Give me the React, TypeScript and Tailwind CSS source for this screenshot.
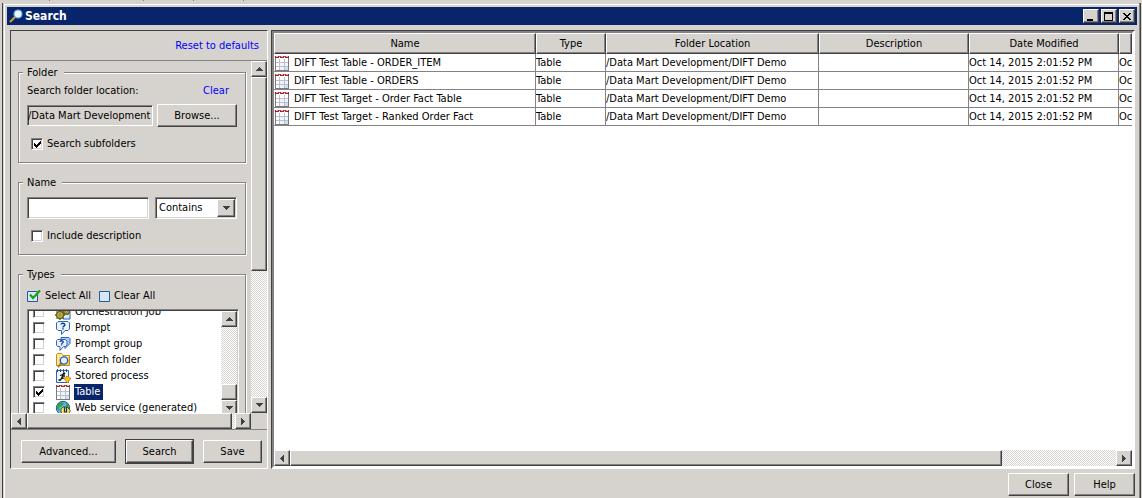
import { useState } from "react";
import type { ReactNode } from "react";
import clsx from "clsx";

const raised =
  "bg-[#d6d3ce] border border-t-white border-l-white border-r-[#424142] border-b-[#424142] shadow-[inset_-1px_-1px_0_#848284]";
const sunken =
  "border border-t-[#848284] border-l-[#848284] border-r-white border-b-white shadow-[inset_1px_1px_0_#424142,inset_-1px_-1px_0_#d6d3ce]";
const track =
  "bg-[conic-gradient(#fff_25%,#d6d3ce_0_50%,#fff_0_75%,#d6d3ce_0)] bg-[length:2px_2px]";

const rows = [
  "DIFT Test Table - ORDER_ITEM",
  "DIFT Test Table - ORDERS",
  "DIFT Test Target - Order Fact Table",
  "DIFT Test Target - Ranked Order Fact",
];

function TableIcon() {
  return (
    <svg width="16" height="16" viewBox="0 0 16 16" shapeRendering="crispEdges" className="shrink-0">
      <path d="M1 1h14v15H1z" fill="#7b797b" />
      <path d="M2 2h12v13H2z" fill="#fff" />
      <path d="M6 8h8v7H6z" fill="#eef4fc" />
      <path d="M10 11h4v4h-4z" fill="#cfe0f7" />
      <path d="M1 1h4v2H1zM6 1h4v2H6zM11 1h4v2h-4z" fill="#a52429" />
      <path d="M2 1h2v1H2zM7 1h2v1H7zM12 1h2v1h-2z" fill="#efb6b5" />
      <path d="M2 7h12v1H2zM2 11h12v1H2zM5 4h1v11H5zM10 4h1v11h-1z" fill="#bdbec6" />
    </svg>
  );
}

function JobIcon() {
  return (
    <svg width="16" height="16" viewBox="0 0 16 16" className="shrink-0">
      <path d="M8 2h7v13H8z" fill="#dbe8fb" stroke="#2a62b4" />
      <circle cx="11.5" cy="7.500" r="2.800" fill="#d8c860" stroke="#6b5d10" strokeWidth="1.400" />
      <circle cx="5" cy="11" r="3.500" fill="#d8c860" stroke="#6b5d10" strokeWidth="1.400" />
      <path d="M5 6v2M5 14v2M0 11h2M8 11h2M1.500 7.500l1.500 1.500M7 13l1.500 1.500M8.500 7.500 7 9M3 13l-1.500 1.500" stroke="#6b5d10" strokeWidth="1.400" />
      <circle cx="5" cy="11" r="1.200" fill="#fff" stroke="#6b5d10" />
      <circle cx="11.5" cy="7.500" r=".9" fill="#fff" stroke="#6b5d10" />
    </svg>
  );
}

function PromptIcon() {
  return (
    <svg width="16" height="16" viewBox="0 0 16 16" className="shrink-0">
      <path d="M3 1.500h10l1.500 1.500v6L13 10.500h-3L6.500 14.500v-4H3L1.500 9V3z" fill="#eaf3ff" stroke="#2c67c4" />
      <path d="M6 4.500C6.300 2.700 9.800 2.700 9.800 4.800 9.800 6.200 8 6 8 7.600M8 8.300v1.200" fill="none" stroke="#123a9c" strokeWidth="1.500" />
    </svg>
  );
}

function PromptGroupIcon() {
  return (
    <svg width="16" height="16" viewBox="0 0 16 16" className="shrink-0">
      <path d="M6 1.500h8l1 1v5l-2 2-3 3V9H6z" fill="#a8cbf6" stroke="#2c67c4" />
      <path d="M2.500 3.500h8L12 5v4l-1.500 1.500H8.500l-3.500 4v-4H2.500L1.500 9V4.500z" fill="#eaf3ff" stroke="#2c67c4" />
      <path d="M5 5.800C5.200 4.300 8.400 4.400 8.200 6 8.100 7.200 6.700 7 6.700 8.200M6.700 8.600v1" fill="none" stroke="#123a9c" strokeWidth="1.300" />
    </svg>
  );
}

function SearchFolderIcon() {
  return (
    <svg width="16" height="16" viewBox="0 0 16 16" className="shrink-0">
      <path d="M1.500 13.500v-11l1-1h4l1.500 2h6.500v10z" fill="#ffe9a5" stroke="#c08c18" />
      <path d="M4 5h10v8H4z" fill="#fbd264" />
      <path d="M6.500 11 3 15" stroke="#b0761a" strokeWidth="2" />
      <circle cx="9" cy="8.500" r="3.700" fill="#e4f1ff" stroke="#2459bd" strokeWidth="1.300" />
    </svg>
  );
}

function ProcessIcon() {
  return (
    <svg width="16" height="16" viewBox="0 0 16 16" className="shrink-0">
      <path d="M1.500 2.500h12v12h-12z" fill="#eef5ff" stroke="#2a62b4" />
      <path d="M2 1h1v3H2zM5 1h1v3H5zM8 1h1v3H8zM11 1h1v3h-1z" fill="#2a4f90" />
      <circle cx="9" cy="5.500" r="1.200" fill="#111" />
      <path d="M5 7.500 8 6.500 7 9.500l2 1M7 9.500 5.500 12H3.500M8 8h2" fill="none" stroke="#111" strokeWidth="1.300" />
      <path d="M8.500 10h2.500V8.500h3V10h2L12.500 15z" fill="#ffbd21" stroke="#b87a00" strokeWidth=".7" />
    </svg>
  );
}

function WebIcon() {
  return (
    <svg width="16" height="16" viewBox="0 0 16 16" className="shrink-0">
      <circle cx="8" cy="8" r="6.700" fill="#55b5ee" stroke="#1b5d9c" />
      <path d="M2.500 5 6 2l3 1-2 3-3 1 .5 4L2 9zM11 2.500l3 3v3l-3-2z" fill="#36a045" />
      <path d="M6 9l2-2h4l3 3v2l-2 2H8l-2-2z" fill="#f5e25c" stroke="#5e6420" />
      <path d="M9.500 7v5h2V7" fill="none" stroke="#233250" strokeWidth="1.200" />
    </svg>
  );
}

function Arrow({ dir }: { dir: "up" | "down" | "left" | "right" }) {
  const paths = {
    up: "M3 0h1v1h1v1h1v1h1v1H0V3h1V2h1V1h1z",
    down: "M0 0h7v1H6v1H5v1H4v1H3V3H2V2H1V1H0z",
    left: "M4 0v7H3V6H2V5H1V4H0V3h1V2h1V1h1V0z",
    right: "M0 0h1v1h1v1h1v1h1v1H3v1H2v1H1v1H0z",
  };
  const vertical = dir === "up" || dir === "down";
  return (
    <svg width={vertical ? 7 : 4} height={vertical ? 4 : 7} shapeRendering="crispEdges">
      <path d={paths[dir]} fill="#424142" />
    </svg>
  );
}

function ScrollButton({ dir }: { dir: "up" | "down" | "left" | "right" }) {
  return (
    <button type="button" aria-label={`Scroll ${dir}`} className={clsx(raised, "flex size-4 shrink-0 items-center justify-center")}>
      <Arrow dir={dir} />
    </button>
  );
}

function Button({ children, className }: { children: ReactNode; className?: string }) {
  return (
    <button type="button" className={clsx(raised, "h-[23px] shrink-0 text-center", className)}>
      {children}
    </button>
  );
}

interface CheckProps {
  label: ReactNode;
  defaultChecked?: boolean;
  className?: string;
}

function Check({ label, defaultChecked = false, className }: CheckProps) {
  const [on, setOn] = useState(defaultChecked);
  return (
    <label className={clsx("flex shrink-0 items-center", className)}>
      <span className="grid size-3 shrink-0">
        <input
          type="checkbox"
          checked={on}
          onChange={(e) => setOn(e.target.checked)}
          className={clsx(sunken, "col-start-1 row-start-1 size-3 appearance-none bg-white")}
        />
        {on && (
          <svg width="12" height="12" shapeRendering="crispEdges" className="pointer-events-none col-start-1 row-start-1">
            <path d="M3 5h1v1h1v1h1V6h1V5h1V4h1V3h1v3H9v1H8v1H7v1H6v1H5V9H4V8H3z" fill="#000" />
          </svg>
        )}
      </span>
      {label}
    </label>
  );
}

function Group({ title, className, children }: { title: string; className?: string; children: ReactNode }) {
  return (
    <fieldset
      className={clsx(
        "min-w-0 shrink-0 border border-[#848284] pl-2 shadow-[inset_1px_1px_0_#fff,1px_1px_0_#fff]",
        className,
      )}
    >
      <legend className="-ml-1 bg-[#d6d3ce] pr-1.5 pl-1 leading-[13px]">{title}</legend>
      {children}
    </fieldset>
  );
}

const types = [
  { name: "Orchestration Job", icon: <JobIcon /> },
  { name: "Prompt", icon: <PromptIcon /> },
  { name: "Prompt group", icon: <PromptGroupIcon /> },
  { name: "Search folder", icon: <SearchFolderIcon /> },
  { name: "Stored process", icon: <ProcessIcon /> },
  { name: "Table", icon: <TableIcon />, selected: true },
  { name: "Web service (generated)", icon: <WebIcon /> },
];

function TypeList() {
  return (
    <div className={clsx(sunken, "mt-1.5 flex h-[109px] bg-white p-px")}>
      <div className="flex min-w-0 flex-1 flex-col justify-end overflow-hidden pl-1">
        {types.map((t) => (
          <Check
            key={t.name}
            defaultChecked={t.selected}
            className="h-4"
            label={
              <>
                <span className="ml-2.5 flex">{t.icon}</span>
                <span
                  className={clsx(
                    "ml-[3px] px-px leading-4 whitespace-nowrap",
                    t.selected && "bg-[#08246b] pr-[3px] text-white",
                  )}
                >
                  {t.name}
                </span>
              </>
            }
          />
        ))}
      </div>
      <div className={clsx(track, "flex w-4 flex-col")}>
        <ScrollButton dir="up" />
        <div className="flex-1" />
        <div className={clsx(raised, "h-4")} />
        <ScrollButton dir="down" />
      </div>
    </div>
  );
}

function SearchPanel() {
  return (
    <section className="flex w-[258px] shrink-0 flex-col border border-t-[#424142] border-r-white border-b-white border-l-[#424142]">
      <div className="flex h-[30px] shrink-0 items-center justify-end border-b border-[#848284] pr-2">
        <a href="#reset" className="text-[#0000ff]">Reset to defaults</a>
      </div>
      <div className="flex min-h-0 flex-1">
        <div className="flex min-w-0 flex-1 flex-col">
          <div className="flex min-h-0 flex-1 flex-col overflow-hidden pt-[5px] pr-[5px] pl-[7px]">
            <Group title="Folder" className="pt-[5px] pr-2 pb-[11px]">
              <div className="flex justify-between pr-2">
                <label htmlFor="location">Search folder location:</label>
                <a href="#clear" className="text-[#0000ff]">Clear</a>
              </div>
              <div className="mt-1.5 flex items-center gap-1">
                <input
                  id="location"
                  readOnly
                  defaultValue="/Data Mart Development"
                  className={clsx(sunken, "h-[21px] min-w-0 flex-1 bg-[#d6d3ce] p-0 outline-none")}
                />
                <Button className="w-20">Browse...</Button>
              </div>
              <Check label={<span className="ml-1">Search subfolders</span>} defaultChecked className="mt-2.5 ml-1" />
            </Group>

            <Group title="Name" className="mt-[13px] pt-2 pr-2 pb-[11px]">
              <div className="flex gap-1.5">
                <input aria-label="Name" className={clsx(sunken, "h-[22px] min-w-0 flex-1 bg-white px-1 outline-none")} />
                <div className="grid w-[82px]">
                  <select
                    aria-label="Match"
                    className={clsx(sunken, "col-start-1 row-start-1 h-[22px] appearance-none bg-white pl-[3px] outline-none")}
                  >
                    <option>Contains</option>
                  </select>
                  <span className={clsx(raised, "pointer-events-none col-start-1 row-start-1 mr-0.5 flex h-[18px] w-[18px] items-center justify-center self-center justify-self-end")}>
                    <Arrow dir="down" />
                  </span>
                </div>
              </div>
              <Check label={<span className="ml-1">Include description</span>} className="mt-2.5 ml-1" />
            </Group>

            <Group title="Types" className="mt-[13px] pt-2 pr-1.5 pb-3">
              <div className="flex gap-2">
                <button type="button" className="flex items-center gap-1">
                  <svg width="14" height="14" viewBox="0 0 14 14">
                    <path d="M.5 2.500h10v10H.5z" fill="#d9e7fa" stroke="#295994" />
                    <path d="M3 5.500 6 9 13 1.500" fill="none" stroke="#18a218" strokeWidth="2.200" />
                  </svg>
                  Select All
                </button>
                <button type="button" className="flex items-center gap-1">
                  <svg width="11" height="14" viewBox="0 0 11 14">
                    <path d="M.5 2.500h10v10H.5z" fill="#d9e7fa" stroke="#295994" />
                  </svg>
                  Clear All
                </button>
              </div>
              <TypeList />
            </Group>
          </div>
          <div className={clsx(track, "flex")}>
            <ScrollButton dir="left" />
            <div className={clsx(raised, "h-4 flex-1")} />
            <div className="w-[3px]" />
            <ScrollButton dir="right" />
          </div>
        </div>
        <div className="mb-4 flex w-4 flex-col">
          <ScrollButton dir="up" />
          <div className={clsx(track, "flex-1")}>
            <div className={clsx(raised, "h-[194px]")} />
          </div>
          <ScrollButton dir="down" />
        </div>
      </div>
      <div className="flex h-[39px] shrink-0 gap-2.5 border-t border-[#848284] pt-2.5 pl-2.5">
        <Button className="w-[95px]">Advanced...</Button>
        <Button className="w-[67px] outline outline-[#424142]">Search</Button>
        <Button className="w-[59px]">Save</Button>
      </div>
    </section>
  );
}

function Results() {
  const cell = "h-[18px] overflow-hidden border-r border-b border-[#848284] p-0 whitespace-nowrap";
  return (
    <section className="flex min-w-0 flex-1 border border-t-[#424142] border-r-white border-b-white border-l-[#424142]">
      <div className="flex min-w-0 flex-1 flex-col border-2 border-t-[#848284] border-r-white border-b-white border-l-[#848284] bg-white">
        <table className="w-full table-fixed border-separate border-spacing-0 text-left">
          <colgroup>
            <col className="w-[262px]" />
            <col className="w-[70px]" />
            <col className="w-[213px]" />
            <col className="w-[150px]" />
            <col className="w-[150px]" />
            <col />
          </colgroup>
          <thead>
            <tr>
              {["Name", "Type", "Folder Location", "Description", "Date Modified", ""].map((h) => (
                <th key={h} className={clsx(raised, "h-[21px] p-0 text-center font-normal")}>{h}</th>
              ))}
            </tr>
          </thead>
          <tbody>
            {rows.map((name) => (
              <tr key={name}>
                <td className={cell}>
                  <div className="flex items-center gap-1">
                    <TableIcon />
                    {name}
                  </div>
                </td>
                <td className={cell}>Table</td>
                <td className={cell}>/Data Mart Development/DIFT Demo</td>
                <td className={cell} />
                <td className={cell}>Oct 14, 2015 2:01:52 PM</td>
                <td className={clsx(cell, "border-r-0")}>Oc</td>
              </tr>
            ))}
          </tbody>
        </table>
        <div className={clsx(track, "mt-auto flex")}>
          <ScrollButton dir="left" />
          <div className={clsx(raised, "h-4 w-[83%]")} />
          <div className="flex-1" />
          <ScrollButton dir="right" />
        </div>
      </div>
    </section>
  );
}

function TitleBar() {
  const box = clsx(raised, "flex h-3.5 w-4 items-center justify-center");
  return (
    <header className="flex h-[18px] shrink-0 items-center bg-[#08246b] px-0.5 text-white">
      <svg width="14" height="14" viewBox="0 0 14 14">
        <path d="M1 13 6 8" stroke="#d69a31" strokeWidth="2.200" />
        <circle cx="9" cy="5" r="4" fill="#e7f7ff" stroke="#6ba6e7" strokeWidth="1.200" />
      </svg>
      <h1 className="ml-0.5 flex-1 text-[12px] font-bold">Search</h1>
      <button type="button" aria-label="Minimize" className={box}>
        <svg width="10" height="9" shapeRendering="crispEdges"><path d="M1 7h6v2H1z" /></svg>
      </button>
      <button type="button" aria-label="Maximize" className={clsx(box, "ml-0.5")}>
        <svg width="10" height="9" shapeRendering="crispEdges"><path d="M0 0h9v9H0zM1 2v6h7V2z" fillRule="evenodd" /></svg>
      </button>
      <button type="button" aria-label="Close window" className={clsx(box, "ml-0.5")}>
        <svg width="8" height="7" shapeRendering="crispEdges">
          <path d="M0 0h2v1h1v1h2V1h1V0h2v1H7v1H6v1H5v1h1v1h1v1h1v1H6V6H5V5H3v1H2v1H0V6h1V5h1V4h1V3H2V2H1V1H0z" />
        </svg>
      </button>
    </header>
  );
}

export default function App() {
  return (
    <div className="flex h-screen flex-col overflow-hidden bg-[#d6d3ce] font-['DejaVu_Sans_Condensed','DejaVu_Sans',sans-serif] text-[11px] leading-[14px] text-black">
      <div className="flex h-[3px] shrink-0 pl-[49px]">
        <i className="mr-[93px] h-px w-px bg-[#848284]" />
        <i className="mr-[49px] h-px w-px bg-[#848284]" />
        <i className="mr-[49px] h-px w-px bg-[#848284]" />
        <i className="h-px w-px bg-[#848284]" />
      </div>
      <div className="mr-px ml-0.5 flex min-h-0 flex-1 flex-col border-r border-l border-[#424142] shadow-[inset_-1px_0_0_#848284]">
        <div className="mt-px mr-px ml-px flex min-h-0 flex-1 flex-col border-t border-l border-white pt-0.5 pr-0.5 pl-0.5">
          <TitleBar />
          <main className="flex min-h-0 flex-1 gap-[3px] pt-[5px] pr-0.5 pl-[3px]">
            <SearchPanel />
            <Results />
          </main>
          <footer className="flex h-[29px] shrink-0 justify-end gap-[5px] pt-1 pr-0.5">
            <Button className="w-[61px]">Close</Button>
            <Button className="w-[61px]">Help</Button>
          </footer>
        </div>
      </div>
    </div>
  );
}
